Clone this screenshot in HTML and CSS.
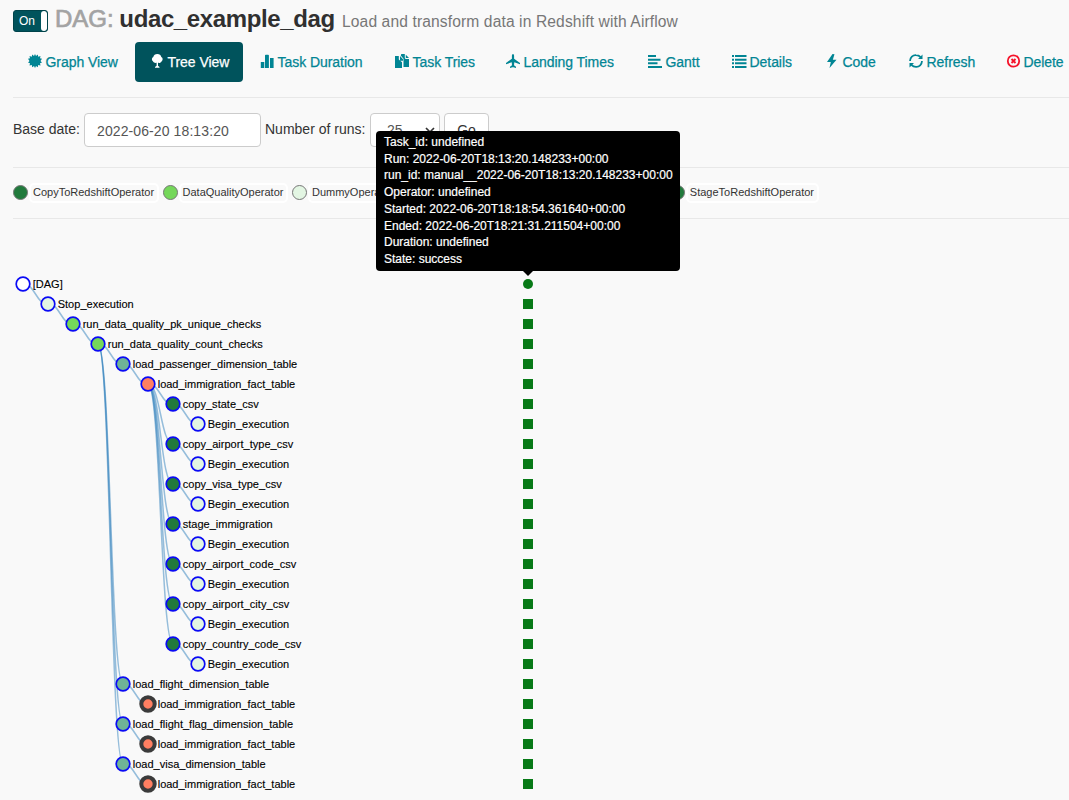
FILE: index.html
```html
<!DOCTYPE html>
<html lang="en">
<head>
<meta charset="utf-8">
<title>udac_example_dag</title>
<link rel="stylesheet" href="styles.css">
</head>
<body>
<header class="title">
  <span class="toggle"><span class="toggle-on">On</span><span class="toggle-handle"></span></span>
  <h3><span class="muted">DAG:</span> <span class="name">udac_example_dag</span></h3>
  <small class="desc">Load and transform data in Redshift with Airflow</small>
</header>
<nav class="pills">
  <a class="pill"><svg class="icon" viewBox="0 0 14 14"><path d="M7 0l1 2 1.8-1.5.4 2.2 2.3-.6-.5 2.2 2 .5L12.500 7l1.500 1.500-2 .7.5 2.300-2.300-.5-.4 2.300L8 12l-1 2-1-2-1.800 1.300-.4-2.300-2.300.5.5-2.300-2-.7L1.500 7 0 4.800l2-.5-.5-2.200 2.300.6.4-2.200L6 2z"/></svg><span>Graph View</span></a>
  <a class="pill active"><svg class="icon" viewBox="0 0 14 14"><path d="M7.300 0C9.500 0 11 1.300 11.300 3c1.700.7 1.800 3.200.4 4.200-.8 1.700-2.300 2-3.700 1.600v3l1.500 1.200v.8H5v-.8l1.600-1.200v-3C5 9.300 3.600 8.500 2.900 7.200 1.300 6.200 1.700 3.700 3.300 3 3.700 1.200 5.200 0 7.300 0z"/></svg><span>Tree View</span></a>
  <a class="pill duration"><svg class="icon" viewBox="0 0 14 14"><path d="M.8 8h3.500v6H.8zM5 1.500Q5 .7 5.800.7h2.300q.8 0 .8.800V14H5zM10 4h3.600v10H10z"/></svg><span>Task Duration</span></a>
  <a class="pill tries"><svg class="icon" viewBox="0 0 14 14"><path d="M0 2h3.800v3.500L7 8.300V14H0zM5 2l3 3.300v1.500H5zM6.300 0h3.500v3.800L10.500 5H14v8H8.500V4.800L5.800 1.500zM10.800.7 14 4h-3.200z"/></svg><span>Task Tries</span></a>
  <a class="pill landing"><svg class="icon" viewBox="0 0 14 14"><path d="M7 0c.8 0 1.100 1 1.100 2v2.700L14 9v1.300L8.300 8.300 8 11.200l2 1.600V14l-2.500-.8h-1L4 14v-1.200l2-1.600-.3-2.900L0 10.300V9l5.900-4.300V2C5.900 1 6.200 0 7 0z"/></svg><span>Landing Times</span></a>
  <a class="pill gantt"><svg class="icon" viewBox="0 0 14 14"><path d="M0 1h8v2H0zM0 4.700h12.500v2H0zM0 8.300h9.500v2H0zM0 12h14v2H0z"/></svg><span>Gantt</span></a>
  <a class="pill details"><svg class="icon" viewBox="0 0 14 14"><path d="M0 1h2v2H0zM3 1h11.500v2H3zM0 4.700h2v2H0zM3 4.700h11.500v2H3zM0 8.300h2v2H0zM3 8.300h11.500v2H3zM0 12h2v2H0zM3 12h11.500v2H3z"/></svg><span>Details</span></a>
  <a class="pill code"><svg class="icon" viewBox="0 0 14 14"><path d="M7.500 0 2 8h3.800L4.500 14 11.500 5.800H7.800L9.500.3z"/></svg><span>Code</span></a>
  <a class="pill refresh"><svg class="icon" viewBox="0 0 14 14"><path class="line" d="M1 7C1.200 3.500 3.700 1 7 1.200c2 0 3.500.8 4.600 2M13 7c-.2 3.500-2.700 6-6 5.800-2 0-3.500-.8-4.600-2"/><path d="M13.500.5V5H9zM.5 13.500V9H5z"/></svg><span>Refresh</span></a>
  <a class="pill danger"><svg class="icon" viewBox="0 0 14 14"><circle class="line" cx="6.500" cy="7" r="5.700"/><path class="line" d="M4.500 5l4 4M8.500 5l-4 4"/></svg><span>Delete</span></a>
</nav>
<form class="filters">
  <label class="base">Base date:</label>
  <span class="control date">2022-06-20 18:13:20</span>
  <label class="count">Number of runs:</label>
  <span class="control runs">25<svg class="chevron" viewBox="0 0 10 6"><path d="M1 1l4 4 4-4"/></svg></span>
  <span class="control go">Go</span>
</form>
<div class="legend">
  <i class="dot copy"></i><span class="op">CopyToRedshiftOperator</span>
  <i class="dot quality"></i><span class="op">DataQualityOperator</span>
  <i class="dot dummy"></i><span class="op">DummyOperator</span>
  <span class="stage-group"><i class="dot stage"></i><span class="op">StageToRedshiftOperator</span></span>
</div>
<main class="chart">
  <svg id="tree" width="1069" height="581" viewBox="0 219 1069 581"></svg>
  <div class="tooltip">
    <div>Task_id: undefined</div>
    <div>Run: 2022-06-20T18:13:20.148233+00:00</div>
    <div>run_id: manual__2022-06-20T18:13:20.148233+00:00</div>
    <div>Operator: undefined</div>
    <div>Started: 2022-06-20T18:18:54.361640+00:00</div>
    <div>Ended: 2022-06-20T18:21:31.211504+00:00</div>
    <div>Duration: undefined</div>
    <div>State: success</div>
  </div>
</main>
<script src="tree.js"></script>
</body>
</html>
```
FILE: styles.css
```css
* { box-sizing: border-box; }
body { margin: 0; width: 1069px; height: 800px; overflow: hidden; background: #f9f9f9; color: #333; font: 14px/20px "Liberation Sans", Arial, sans-serif; }
.title { height: 42px; padding-left: 13px; display: flex; align-items: baseline; }
.toggle { align-self: flex-start; margin-top: 10px; width: 35px; height: 22px; display: flex; overflow: hidden; border: 1px solid #00434a; border-radius: 3px; background: #00535c; color: #fff; }
.toggle-on { width: 27px; padding-left: 5px; font-size: 12px; line-height: 20px; }
.toggle-handle { width: 6px; background: #fff; border-radius: 3px; }
h3 { width: 280px; margin: 6px 0 0 7px; font-size: 24px; line-height: 26px; font-weight: bold; white-space: nowrap; color: #303030; }
.muted { color: #a3a3a3; font-weight: normal; -webkit-text-stroke: .7px #a3a3a3; }
.name { margin-left: -1px; letter-spacing: -.38px; }
.desc { margin-left: 7px; font-size: 15.6px; letter-spacing: .12px; color: #777; white-space: nowrap; }
.pills { display: flex; gap: 2px; height: 40px; padding-left: 13px; color: #018594; }
.pill { flex: none; width: 120px; display: flex; align-items: center; gap: 3.5px; padding-left: 15px; border-radius: 4px; white-space: nowrap; letter-spacing: -.05px; -webkit-text-stroke: .25px; }
.pill.active { width: 108px; background: #00535c; color: #fff; }
.duration { width: 133px; }
.tries { width: 109px; }
.landing { width: 140px; }
.gantt { width: 82px; }
.details { width: 91px; }
.code { width: 82px; }
.refresh { width: 96px; }
.danger { width: 90px; gap: 2.5px; letter-spacing: -.1px; }
.icon { flex: none; width: 14px; height: 14px; fill: currentColor; overflow: visible; margin-top: -2px; }
.line { fill: none; stroke: currentColor; stroke-width: 1.8; }
.danger .icon { color: #f5132a; }
.filters { height: 71px; margin: 15px 0 0 13px; padding-top: 15px; border-top: 1px solid #e8e8e8; border-bottom: 1px solid #e8e8e8; display: flex; gap: 4px; line-height: 33px; white-space: nowrap; }
.base { width: 67px; }
.count { width: 101px; }
.control { height: 34px; border: 1px solid #ccc; border-radius: 4px; background: #fff; color: #555; line-height: 34px; }
.date { width: 177px; padding-left: 12px; letter-spacing: .1px; }
.runs { width: 70px; padding: 0 4px 0 16px; display: flex; align-items: center; justify-content: space-between; }
.chevron { width: 10px; height: 6px; fill: none; stroke: #333; stroke-width: 1.7; }
.go { width: 45px; text-align: center; color: #333; line-height: 33px; }
.legend { position: relative; height: 51px; margin-left: 13px; border-bottom: 1px solid #e8e8e8; display: flex; align-items: center; font-size: 11px; white-space: nowrap; }
.dot { flex: none; width: 15px; height: 15px; margin-top: -2px; border: 1px solid #777; border-radius: 50%; }
.op { height: 20px; margin: 0 4px 0 1px; padding: 0 2.5px 0 2px; border: 2px solid #fff; border-radius: 5px; line-height: 15px; }
.copy, .stage { background: #217a3c; }
.quality { background: #75d75a; }
.dummy { background: #e3f6e3; }
.stage-group { display: flex; align-items: center; margin-left: auto; margin-right: 246.5px; }
.chart { position: relative; height: 581px; }
.chart > svg { display: block; }
.chart text { font-size: 11px; fill: #000; stroke: #000; stroke-width: .12px; }
.link { fill: none; stroke: #3182bd; stroke-opacity: .5; stroke-width: 1.5; }
.tooltip { position: absolute; left: 376px; top: -88px; width: 304px; height: 140px; padding: 3px 8px; border-radius: 4px; background: #000; color: #fff; font-size: 12px; line-height: 16.7px; white-space: nowrap; -webkit-text-stroke: .2px; }
.tooltip::after { content: ""; position: absolute; left: 147px; top: 140px; border: 5px solid transparent; border-top-color: #000; border-bottom: 0; }
```
FILE: tree.js
```js
const fills = { root: '#fff', dummy: '#e3f6e3', quality: '#75d75a', dim: '#6fb497', fact: '#ff7f61', copy: '#217a3c' };
// name, depth, kind, parent row, label width
const rows = [
  ['[DAG]', 0, 'root', null, 30],
  ['Stop_execution', 1, 'dummy', 0, 76],
  ['run_data_quality_pk_unique_checks', 2, 'quality', 1, 178.500],
  ['run_data_quality_count_checks', 3, 'quality', 2, 155],
  ['load_passenger_dimension_table', 4, 'dim', 3, 164.500],
  ['load_immigration_fact_table', 5, 'fact', 4, 137.500]
];
[['copy_state_csv', 76], ['copy_airport_type_csv', 110.500], ['copy_visa_type_csv', 99], ['stage_immigration', 90], ['copy_airport_code_csv', 113.500], ['copy_airport_city_csv', 106.500], ['copy_country_code_csv', 118.500]].forEach(([name, w]) => {
  rows.push([name, 6, 'copy', 5, w]);
  rows.push(['Begin_execution', 7, 'dummy', rows.length - 1, 81.500]);
});
[['load_flight_dimension_table', 136.500], ['load_flight_flag_dimension_table', 160.500], ['load_visa_dimension_table', 133]].forEach(([name, w]) => {
  rows.push([name, 4, 'dim', 3, w]);
  rows.push(['load_immigration_fact_table', 5, 'fact', rows.length - 1, 137.500]);
});
const x = i => 23 + rows[i][1] * 25;
const y = i => 284 + i * 20;
let links = '', nodes = '';
rows.forEach(([name, depth, kind, parent, width], i) => {
  if (parent !== null) {
    const mid = (x(parent) + x(i)) / 2;
    links += `<path class="link" d="M${x(parent)},${y(parent)}C${mid},${y(parent)} ${mid},${y(i)} ${x(i)},${y(i)}"/>`;
  }
  const repeated = kind === 'fact' && i > 5;
  nodes += `<circle cx="${x(i)}" cy="${y(i)}" r="${repeated ? 6.7 : 6.8}" fill="${fills[kind]}" stroke="${repeated ? '#3b3b3b' : '#0a0af5'}" stroke-width="${repeated ? 4 : 1.7}"/>`;
  nodes += `<text x="${x(i) + 9.700}" y="${y(i) + 4}" textLength="${width}">${name}</text>`;
  nodes += i === 0
    ? `<circle cx="528" cy="284" r="5" fill="#087a17"/>`
    : `<rect x="523" y="${y(i) - 5}" width="10" height="10" fill="#087a17"/>`;
});
document.getElementById('tree').innerHTML = links + nodes;
```
